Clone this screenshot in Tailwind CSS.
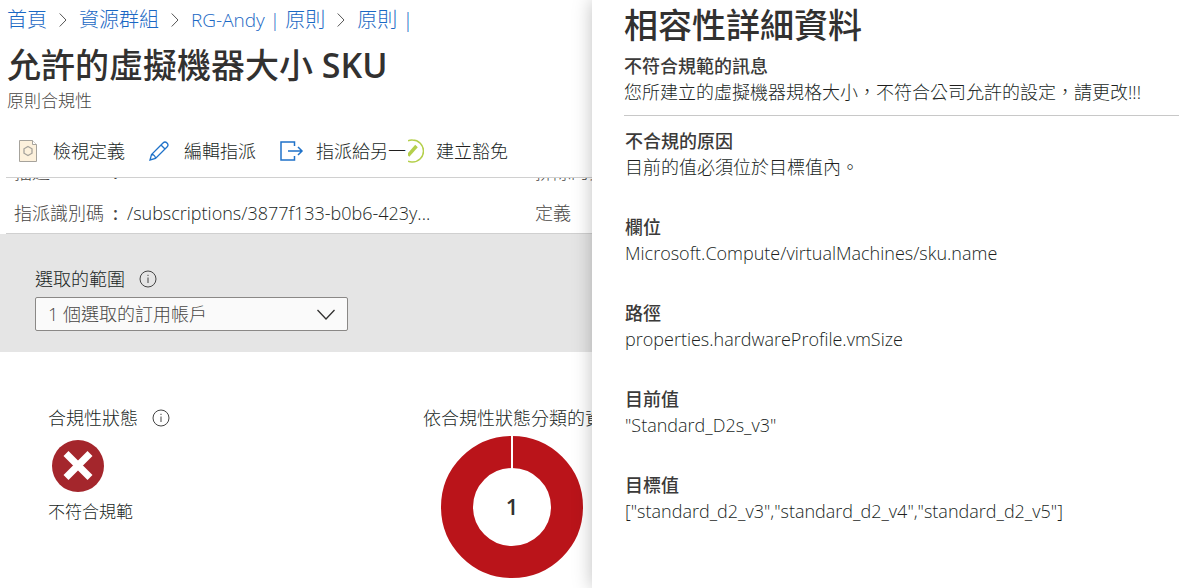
<!doctype html>
<html lang="zh-Hant">
<head>
    <meta charset="UTF-8">
    <meta name="viewport" content="width=device-width, initial-scale=1">
    <title>原則合規性</title>
    <script src="https://cdn.jsdelivr.net/npm/@tailwindcss/browser@4"></script>
</head>
<body class="bg-white text-[#201f1e] text-[18px] leading-6 font-light font-['Open_Sans','Noto_Sans_CJK_TC',sans-serif]">
<div class="grid grid-cols-[592fr_587fr] min-h-screen">

    <!-- policy compliance -->
    <main class="min-w-0 overflow-hidden whitespace-nowrap">
        <nav class="flex items-center gap-3 pl-[7px] pt-1.5 text-[20px] leading-7 text-[#1a68c4]">
            <a href="#">首頁</a>
            <svg class="w-2 h-4 text-[#555]" viewBox="0 0 8 16" fill="none" stroke="currentColor"><path d="M.7 1.5 7 8 .7 14.5"/></svg>
            <a href="#">資源群組</a>
            <svg class="w-2 h-4 text-[#555]" viewBox="0 0 8 16" fill="none" stroke="currentColor"><path d="M.7 1.5 7 8 .7 14.5"/></svg>
            <a href="#"><span class="text-[19px]">RG-Andy |</span> 原則</a>
            <svg class="w-2 h-4 text-[#555]" viewBox="0 0 8 16" fill="none" stroke="currentColor"><path d="M.7 1.5 7 8 .7 14.5"/></svg>
            <a href="#">原則 |</a>
        </nav>
        <h1 class="pl-[7px] pt-[9px] text-[34px] leading-11 font-medium text-[#323130]">允許的虛擬機器大小 <span class="font-semibold">SKU</span></h1>
        <p class="pl-[7px] pt-0.5 text-[17px] leading-6 text-[#484644]">原則合規性</p>

        <div class="flex items-center pl-[18px] mt-[23px] h-[30px] mb-[11px]">
            <button class="flex items-center gap-[15px]">
                <svg class="w-5 h-6" viewBox="0 0 20 24" fill="#fdf1dc" stroke="#a6a39c"><path d="M1.5 1.5h13l4 4v17h-17z"/><path d="M14.5 1.5v4h4" fill="#fff"/><path d="M10 7.5 14 9.8v4.4l-4 2.3-4-2.3V9.8z" stroke-width="1.3"/></svg>
                檢視定義
            </button>
            <button class="flex items-center gap-[15px] ml-6">
                <svg class="w-5 h-5" viewBox="0 0 20 20" fill="none" stroke="#1f72c9" stroke-width="1.3"><path d="M1 19l1.5-5.5L14 2a2.7 2.7 0 0 1 4 4L6.5 17.5zM2.5 13.5a4 4 0 0 1 4 4M12 4l4 4"/></svg>
                編輯指派
            </button>
            <button class="flex items-center gap-3 ml-6">
                <svg class="w-6 h-5" viewBox="0 0 24 20" fill="none" stroke="#1f72c9" stroke-width="1.5"><path d="M14.5 5V1H1v18h13.5v-4M8 10h14M18 6l4 4-4 4"/></svg>
                <span class="w-[92px] text-left">指派給另一</span>
            </button>
            <button class="flex items-center gap-3">
                <svg class="w-4 h-6" viewBox="0 0 16 24" fill="none" stroke="#b4cf4b"><path d="M0 1.7a10.5 10.5 0 0 1 4.5-.7a11 11 0 0 1 0 22a10.5 10.5 0 0 1-4.5-.7" stroke-width="1.5"/><path d="M0 16.5 8.5 7" stroke-width="3.5"/></svg>
                建立豁免
            </button>
        </div>

        <section class="ml-1.5 border-y border-[#d0d0d0] text-[#484644]">
            <!-- first row is scrolled under the command bar -->
            <div class="flex items-end h-1.5 overflow-hidden pl-2">
                <span class="w-[99px] shrink-0">描述</span>
                <span class="w-[422px] shrink-0 font-semibold">:</span>
                <span>排除的資源</span>
            </div>
            <div class="flex items-center pl-2 mt-[17px] h-6 mb-2">
                <span class="w-[99px]">指派識別碼</span>
                <span class="w-[14px] font-semibold">:</span>
                <span class="w-[408px] text-[#201f1e]">/subscriptions/3877f133-b0b6-423y...</span>
                <span>定義</span>
            </div>
        </section>

        <section class="bg-[#e5e5e5] pl-[35px] pt-[33px] pb-[21px]">
            <div class="flex items-center gap-3.5">
                <label for="scope">選取的範圍</label>
                <svg class="size-[18px] text-[#444]" viewBox="0 0 18 18" fill="none" stroke="currentColor"><circle cx="9" cy="9" r="8"/><path d="M9 7.5v5.5M9 4.8v1.2"/></svg>
            </div>
            <div class="relative w-[313px] mt-1.5">
                <select id="scope" class="appearance-none w-full h-[34px] pl-3 rounded-xs border border-[#8a8886] bg-[#fafafa] text-[#484644]">
                    <option>1 個選取的訂用帳戶</option>
                </select>
                <svg class="absolute right-3 top-3 w-5 h-3 pointer-events-none" viewBox="0 0 20 12" fill="none" stroke="#323130" stroke-width="1.3"><path d="M1.5 1 10 10l8.5-9"/></svg>
            </div>
        </section>

        <section class="flex pl-12 pt-[54px]">
            <div class="w-[375px] shrink-0">
                <h2 class="flex items-center gap-3.5">合規性狀態
                    <svg class="size-[18px] text-[#444]" viewBox="0 0 18 18" fill="none" stroke="currentColor"><circle cx="9" cy="9" r="8"/><path d="M9 7.5v5.5M9 4.8v1.2"/></svg>
                </h2>
                <svg class="size-[52px] ml-1 mt-2.5" viewBox="0 0 52 52"><circle cx="26" cy="26" r="26" fill="#a4262c"/><path d="M14 13.5l24 24M38 13.5l-24 24" stroke="#fff" stroke-width="7"/></svg>
                <p class="mt-2 text-[17px]">不符合規範</p>
            </div>
            <div>
                <h2>依合規性狀態分類的資源</h2>
                <svg class="size-[142px] ml-[18px] mt-1.5" viewBox="0 0 142 142">
                    <circle cx="71" cy="71" r="55" fill="none" stroke="#ba141a" stroke-width="32"/>
                    <path d="M71 0v33" stroke="#fff" stroke-width="2"/>
                    <text x="71" y="79" text-anchor="middle" class="text-[22px] font-semibold" fill="#323130">1</text>
                </svg>
            </div>
        </section>
    </main>

    <!-- details pane -->
    <aside class="relative min-w-0 bg-white pl-8 shadow-[0_0_18px_rgba(0,0,0,0.25)]">
        <h2 class="pt-[3px] text-[34px] leading-11 font-medium text-[#323130]">相容性詳細資料</h2>
        <div class="border-b border-[#c8c8c8] pt-1.5 pb-2.5 leading-[26px]">
            <h3 class="font-medium text-[#3b3a39]">不符合規範的訊息</h3>
            <p>您所建立的虛擬機器規格大小，不符合公司允許的設定，請更改!!!</p>
        </div>
        <dl class="pl-px pt-3 leading-[26px]">
            <dt class="font-medium text-[#3b3a39]">不合規的原因</dt>
            <dd class="mb-[34px]">目前的值必須位於目標值內。</dd>
            <dt class="font-medium text-[#3b3a39]">欄位</dt>
            <dd class="mb-[34px]">Microsoft.Compute/virtualMachines/sku.name</dd>
            <dt class="font-medium text-[#3b3a39]">路徑</dt>
            <dd class="mb-[34px]">properties.hardwareProfile.vmSize</dd>
            <dt class="font-medium text-[#3b3a39]">目前值</dt>
            <dd class="mb-[34px]">"Standard_D2s_v3"</dd>
            <dt class="font-medium text-[#3b3a39]">目標值</dt>
            <dd>["standard_d2_v3","standard_d2_v4","standard_d2_v5"]</dd>
        </dl>
    </aside>
</div>
</body>
</html>
